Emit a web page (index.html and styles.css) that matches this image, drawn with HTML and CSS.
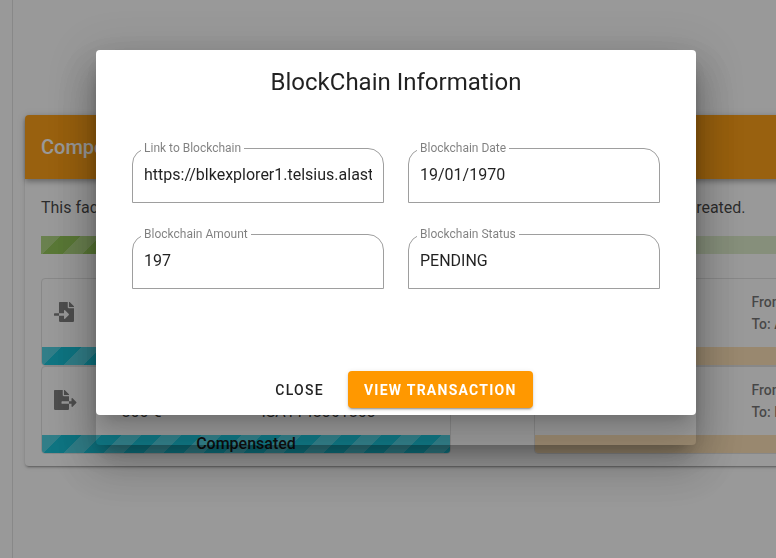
FILE: index.html
```html
<!DOCTYPE html>
<html lang="en">
<head>
    <meta charset="UTF-8" />
    <meta name="viewport" content="width=device-width, initial-scale=1" />
    <title>Compensations</title>
    <link rel="stylesheet" href="styles.css">
</head>
<body>

    <main class="page">
        <section class="card">
            <h2 class="card-title">Compensations</h2>
            <div class="card-body">
                <p class="card-text"><span>This facility shows the compensations that have</span> <span class="text-end">been created.</span></p>
                <div class="bar green"><div class="bar-fill half"></div></div>

                <div class="columns">
                    <div class="column">
                        <article class="item">
                            <div class="item-body">
                                <svg class="icon" viewBox="0 0 512 512"><path d="M16 288c-8.800 0-16 7.200-16 16v32c0 8.800 7.200 16 16 16h112v-64H16zm489-183L407.100 7c-4.500-4.500-10.600-7-17-7H384v128h128v-6.100c0-6.300-2.500-12.400-7-16.900zM352 136V0H152c-13.300 0-24 10.700-24 24v264h128v-65.200c0-14.300 17.300-21.400 27.400-11.300L379 308c6.600 6.700 6.600 17.400 0 24l-95.700 96.400c-10.100 10.100-27.400 3-27.400-11.300V352H128v136c0 13.300 10.700 24 24 24h336c13.300 0 24-10.700 24-24V160H376c-13.200 0-24-10.800-24-24z"/></svg>
                            </div>
                            <div class="bar cyan"><div class="bar-fill"></div></div>
                        </article>
                        <article class="item">
                            <div class="item-body">
                                <svg class="icon" viewBox="0 0 576 512"><path d="M384 121.900c0-6.300-2.500-12.400-7-16.900L279.100 7c-4.500-4.500-10.600-7-17-7H256v128h128zM571 308l-95.700-96.400c-10.100-10.100-27.400-3-27.400 11.300V288h-64v64h64v65.200c0 14.300 17.300 21.400 27.400 11.300L571 332c6.600-6.600 6.600-17.400 0-24zm-379 28v-32c0-8.800 7.200-16 16-16h176V160H248c-13.200 0-24-10.800-24-24V0H24C10.700 0 0 10.700 0 24v464c0 13.300 10.700 24 24 24h336c13.300 0 24-10.700 24-24V352H208c-8.800 0-16-7.200-16-16z"/></svg>
                                <div class="item-info">
                                    <span>800 €</span>
                                    <span>ISA1148361803</span>
                                </div>
                            </div>
                            <div class="bar cyan"><div class="bar-fill"></div><strong>Compensated</strong></div>
                        </article>
                    </div>
                    <div class="column">
                        <article class="item">
                            <div class="item-body">
                                <div class="route"><span>From: Alastria</span><span>To: Asturias</span></div>
                            </div>
                            <div class="bar orange"></div>
                        </article>
                        <article class="item">
                            <div class="item-body">
                                <div class="route"><span>From: Alastria</span><span>To: Burgos</span></div>
                            </div>
                            <div class="bar orange"></div>
                        </article>
                    </div>
                </div>
            </div>
        </section>
    </main>

    <div class="overlay">
        <div class="dialog" role="dialog" aria-labelledby="dialogTitle">
            <form class="dialog-card">
                <h1 class="dialog-title" id="dialogTitle">BlockChain Information</h1>
                <div class="fields">
                    <fieldset class="field">
                        <legend><label for="link">Link to Blockchain</label></legend>
                        <input type="text" id="link" value="https://blkexplorer1.telsius.alastria.io" readonly>
                    </fieldset>
                    <fieldset class="field">
                        <legend><label for="date">Blockchain Date</label></legend>
                        <input type="text" id="date" value="19/01/1970" readonly>
                    </fieldset>
                    <fieldset class="field">
                        <legend><label for="amount">Blockchain Amount</label></legend>
                        <input type="text" id="amount" value="197" readonly>
                    </fieldset>
                    <fieldset class="field">
                        <legend><label for="status">Blockchain Status</label></legend>
                        <input type="text" id="status" value="PENDING" readonly>
                    </fieldset>
                </div>
                <div class="actions">
                    <button type="button" class="btn">Close</button>
                    <button type="button" class="btn btn-primary">View Transaction</button>
                </div>
            </form>
        </div>
    </div>

</body>
</html>
```
FILE: styles.css
```css
* {
    margin: 0;
    padding: 0;
    box-sizing: border-box;
    font-family: Roboto, sans-serif;
}
body {
    background: #fff;
    color: rgba(0, 0, 0, 0.87);
    font-size: 16px;
    line-height: 24px;
    overflow: hidden;
}

/* Page behind the dialog */
.page {
    min-width: 1042px;
    min-height: 100vh;
    margin-left: 12px;
    padding: 115px 12px 0;
    border-left: 1px solid #e0e0e0;
}
.card {
    border-radius: 4px;
    box-shadow: 0 3px 1px -2px rgba(0, 0, 0, 0.2), 0 2px 2px 0 rgba(0, 0, 0, 0.14), 0 1px 5px 0 rgba(0, 0, 0, 0.12);
}
.card-title {
    padding: 16px;
    border-radius: 4px 4px 0 0;
    background: #ff9800;
    color: #fff;
    font-size: 20px;
    font-weight: 500;
    line-height: 32px;
    box-shadow: 0 2px 4px -1px rgba(0, 0, 0, 0.2), 0 4px 5px 0 rgba(0, 0, 0, 0.14), 0 1px 10px 0 rgba(0, 0, 0, 0.12);
}
.card-body {
    padding: 17px 16px 12px;
}
.card-text {
    display: flex;
    margin-bottom: 16px;
    color: rgba(0, 0, 0, 0.8);
    white-space: nowrap;
}
.card-text span {
    flex: 0 0 608px;
}
.card-text .text-end {
    flex: none;
}

/* Striped progress bars */
.bar {
    position: relative;
    display: flex;
    height: 18px;
}
.bar-fill {
    width: 100%;
    background-image: linear-gradient(135deg, rgba(255, 255, 255, 0.25) 25%, transparent 0, transparent 50%, rgba(255, 255, 255, 0.25) 0, rgba(255, 255, 255, 0.25) 75%, transparent 0);
    background-size: 40px 40px;
}
.bar strong {
    position: absolute;
    inset: 0;
    color: #000;
    text-align: center;
    font-weight: 500;
    line-height: 18px;
}
.half {
    width: 50%;
}
.green {
    background: #dcedc8;
}
.green .bar-fill {
    background-color: #8bc34a;
}
.cyan .bar-fill {
    background-color: #00bcd4;
}
.orange {
    background: #ffe0b2;
}

.columns {
    display: grid;
    grid-template-columns: 1fr 1fr;
    margin-top: 24px;
}
.item {
    width: 410px;
    border: 1px solid #e0e0e0;
    border-radius: 4px;
    overflow: hidden;
}
.item-body {
    display: flex;
    height: 68px;
    padding: 12px 12px 0;
}
.icon {
    height: 20px;
    margin-top: 11px;
    fill: #757575;
}
.item-info {
    display: flex;
    gap: 100px;
    margin: 21px 0 0 45px;
}
.route {
    display: flex;
    flex-direction: column;
    margin-left: 205px;
    color: rgba(0, 0, 0, 0.6);
    font-size: 14px;
    font-weight: 500;
    line-height: 22px;
}

/* Dialog */
.overlay {
    position: fixed;
    inset: 0;
    padding: 50px 24px;
    background: rgba(33, 33, 33, 0.46);
}
.dialog {
    max-width: 600px;
    margin-left: 72px;
    padding-bottom: 30px;
    border-radius: 4px;
    box-shadow: 0 11px 15px -7px rgba(0, 0, 0, 0.2), 0 24px 38px 3px rgba(0, 0, 0, 0.14), 0 9px 46px 8px rgba(0, 0, 0, 0.12);
}
.dialog-card {
    padding: 16px 36px 7px;
    border-radius: 4px;
    background: #fff;
    box-shadow: 0 11px 15px -7px rgba(0, 0, 0, 0.2), 0 24px 38px 3px rgba(0, 0, 0, 0.14);
}
.dialog-title {
    text-align: center;
    font-size: 24px;
    font-weight: 400;
    line-height: 32px;
}
.fields {
    display: grid;
    grid-template-columns: 1fr 1fr;
    gap: 24px;
    margin-top: 43px;
}
.field {
    min-width: 0;
    height: 62px;
    padding: 0 11px;
    border: 1px solid #9e9e9e;
    border-radius: 16px 16px 0 0;
}
.field legend {
    margin-left: -3px;
    padding: 0 3px;
    color: rgba(0, 0, 0, 0.5);
    font-size: 12px;
    line-height: 14px;
}
.field label {
    display: block;
}
.field input {
    width: 100%;
    margin-top: 8px;
    border: 0;
    outline: 0;
    background: transparent;
    color: rgba(0, 0, 0, 0.87);
    font-size: 16px;
    line-height: 24px;
}
.actions {
    display: flex;
    justify-content: center;
    gap: 8px;
    margin-top: 82px;
}
.btn {
    height: 37px;
    padding: 0 16px;
    border: 0;
    border-radius: 4px;
    background: transparent;
    color: rgba(0, 0, 0, 0.87);
    font-size: 14px;
    font-weight: 500;
    letter-spacing: 0.09em;
    text-transform: uppercase;
    cursor: pointer;
}
.btn-primary {
    background: #ff9800;
    color: #fff;
    font-weight: 700;
    box-shadow: 0 3px 1px -2px rgba(0, 0, 0, 0.2), 0 2px 2px 0 rgba(0, 0, 0, 0.14), 0 1px 5px 0 rgba(0, 0, 0, 0.12);
}
```
